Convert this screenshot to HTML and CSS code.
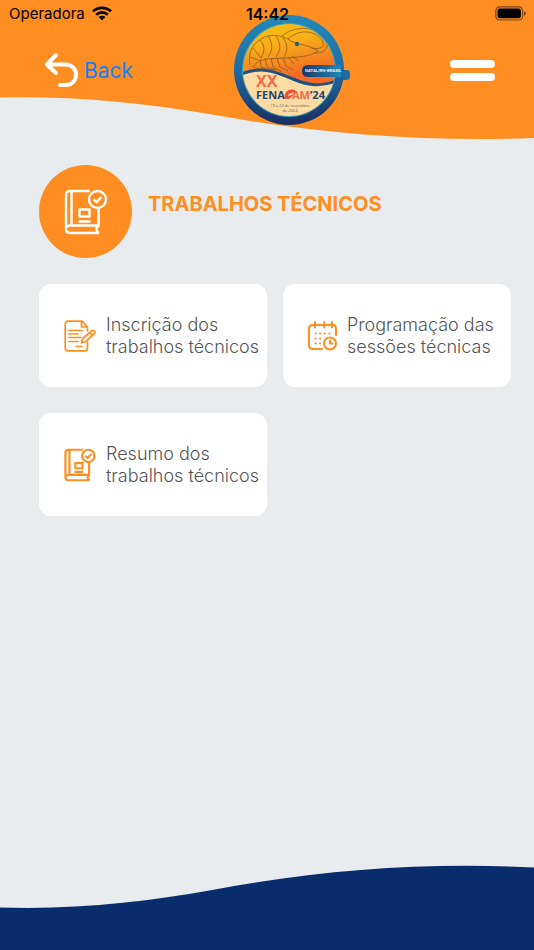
FILE: index.html
```html
<!DOCTYPE html>
<html lang="pt-BR">
<head>
  <meta charset="UTF-8">
  <meta name="viewport" content="width=device-width, initial-scale=1.0">
  <title>Trabalhos Técnicos</title>
  <link rel="stylesheet" href="styles.css">
</head>
<body>
<header class="header">
  <svg class="header-wave" viewBox="0 0 534 140" preserveAspectRatio="none" aria-hidden="true">
    <path d="M0 0H534V138C430 142 325 135 215 115C135 101 65 96 0 97.500Z" fill="#fe8e22"/>
  </svg>

  <div class="status-bar">
    <div class="carrier">
      <span>Operadora</span>
      <svg width="20" height="15" viewBox="0 0 20 15" aria-hidden="true">
        <g fill="none" stroke="#000" stroke-width="2.700">
          <path d="M1 5.300C6 .6 14 .6 19 5.300"/>
          <path d="M4.200 8.700C7.500 5.700 12.500 5.700 15.800 8.700"/>
        </g>
        <path d="M6.600 11.100C8.600 9.400 11.400 9.400 13.400 11.100L10 14.500Z"/>
      </svg>
    </div>
    <span class="clock">14:42</span>
    <svg class="battery" width="31" height="15" viewBox="0 0 31 15" aria-hidden="true">
      <rect x=".8" y=".8" width="26.800" height="13.200" rx="4" fill="none" stroke="#000" stroke-opacity=".5" stroke-width="1.200"/>
      <rect x="2.500" y="2.500" width="23.400" height="9.800" rx="2.300"/>
      <path d="M29 5.200Q31 6 31 7.500Q31 9 29 9.800Z" fill-opacity=".55"/>
    </svg>
  </div>

  <nav class="nav">
    <a class="back" href="#">
      <svg width="35" height="36" viewBox="0 0 35 36" aria-hidden="true">
        <path d="M12 3L3 12.500L12 21M3 12.500H21C28 12.500 32 17 32 22.500C32 28.500 28 33 21 33H16" fill="none" stroke="#fff" stroke-width="4" stroke-linecap="round" stroke-linejoin="round"/>
      </svg>
      <span>Back</span>
    </a>

    <svg class="logo" width="116" height="112" viewBox="0 0 116 112" role="img" aria-label="XX Fenacam 24">
      <defs>
        <linearGradient id="ring" x1="0" y1="0" x2="0" y2="1">
          <stop offset="0" stop-color="#2389b8"/>
          <stop offset=".5" stop-color="#1f6ca4"/>
          <stop offset="1" stop-color="#192d60"/>
        </linearGradient>
        <linearGradient id="sky" x1="0" y1="0" x2=".2" y2="1">
          <stop offset="0" stop-color="#f8c50c"/>
          <stop offset=".3" stop-color="#f9ad18"/>
          <stop offset=".65" stop-color="#f36a24"/>
        </linearGradient>
        <linearGradient id="banner">
          <stop offset="0" stop-color="#19356b"/>
          <stop offset="1" stop-color="#2289b7"/>
        </linearGradient>
        <clipPath id="disc"><circle cx="55" cy="56" r="46"/></clipPath>
      </defs>
      <path d="M102 56H113Q116 56 116 60V63Q116 66 112 66H102Z" fill="#1d6da2"/>
      <circle cx="55" cy="56" r="55" fill="url(#ring)"/>
      <circle cx="55" cy="56" r="47" fill="#32a4c4"/>
      <g clip-path="url(#disc)">
        <rect x="7" y="7" width="97" height="97" fill="url(#sky)"/>
        <path d="M5 61C28 51 42 58 59 65C75 72 88 73 105 66V112H5Z" fill="#ffdca3"/>
        <path d="M5 61C28 51 42 58 59 65C75 72 88 73 105 66" fill="none" stroke="#1f5184" stroke-width="3"/>
        <g fill="none" stroke="#805621" stroke-width=".7">
          <path d="M16 51C14 41 17 31 27 25C36 19 48 21 57 27C65 31 76 31 84 37C76 43 63 43 52 44C39 45 25 43 20 52"/>
          <path d="M48 22C61 11 82 12 91 24C97 33 91 40 80 39M54 25C66 14 82 17 88 26C92 33 86 36 77 34"/>
          <path d="M26 26C31 31 31 38 27 44M34 22C39 29 39 37 34 43M42 22C47 29 47 37 42 43M49 24C54 30 54 37 50 43M19 34L27 44M16 43L24 46"/>
          <path d="M54 43L60 50M49 44L52 52L59 56M43 44L46 53L54 57M37 44L39 53L48 58M31 44L33 53L42 56M26 45L27 53L36 56M58 42L65 47M18 52C26 57 35 54 42 56"/>
        </g>
        <circle cx="63" cy="30" r="2.200" fill="#245d7b"/>
      </g>
      <path d="M74 51H107V63H74Q68 63 68 57Q68 51 74 51Z" fill="url(#banner)"/>
      <text x="71" y="58" class="logo-city">NATAL/RN-BRASIL</text>
      <text x="22" y="73" class="logo-xx">XX</text>
      <text x="22" y="85" class="logo-name">FENA</text>
      <path d="M61 76Q54 74 51 80Q49 85 53 85Q57 85 60 80Q55 83 54 81Q56 78 61 79Z" fill="#f14e37"/>
      <text x="58" y="85" class="logo-name"><tspan class="logo-am">AM</tspan>’24</text>
      <text x="56" y="93" class="logo-date">19 a 22 de novembro</text>
      <text x="56" y="98" class="logo-date">de 2024</text>
    </svg>

    <button class="menu" type="button" aria-label="Menu">
      <span class="menu-line"></span>
      <span class="menu-line"></span>
    </button>
  </nav>
</header>

<!-- book icon, used in the title and in the last card -->
<svg class="sprite" aria-hidden="true">
  <symbol id="book" viewBox="0 0 44 46">
    <g fill="none" stroke="currentColor" stroke-linejoin="round">
      <path d="M26 2H6Q2 2 2 6V40Q2 44 6 44H35M2 40Q2 36.500 6 36.500H34.500V19M7.500 2V36M35 36.500Q30 40 35 44"/>
      <circle cx="33.500" cy="10.500" r="8.500"/>
      <path d="M29.500 10.500L32.500 13.200L37.500 8"/>
      <path d="M15.500 20.500H25.500V27.500H15.500ZM14.500 32.500H26.500"/>
    </g>
  </symbol>
</svg>

<main class="content">
  <div class="page-title">
    <span class="title-icon"><svg class="book" width="44" height="46"><use href="#book"/></svg></span>
    <h1>TRABALHOS TÉCNICOS</h1>
  </div>

  <div class="cards">
    <a class="card" href="#">
      <svg width="32" height="32" viewBox="0 0 32 32" aria-hidden="true">
        <g fill="none" stroke="currentColor" stroke-width="1.700" stroke-linecap="round" stroke-linejoin="round">
          <path d="M23.500 11V7L18 1.200H4Q1.200 1.200 1.200 4V28Q1.200 30.800 4 30.800H20.500Q23.500 30.800 23.500 28V22M17.500 1.500V7H23"/>
          <path d="M5 10.500H18M5 14H14M5 17.500H17M5 21.500H14M12 26.500H18"/>
          <path d="M17.500 22.800L18.800 18.500L27.500 10.800Q29 9.800 30.500 11.200Q31.500 12.800 30 14.200L21.800 21.500ZM25.800 12.500L28.500 15.500"/>
        </g>
      </svg>
      <span>Inscrição dos<br>trabalhos técnicos</span>
    </a>

    <a class="card" href="#">
      <svg width="29" height="30" viewBox="0 0 29 30" aria-hidden="true">
        <g fill="none" stroke="currentColor" stroke-width="2" stroke-linecap="round">
          <path d="M25 4Q28 4 28 8V14M4.500 4Q1 4 1 7.500V24Q1 28 5 28H14"/>
          <path d="M7 1V6.500M16.200 1V6.500M24 1V6.500M4.500 4H25"/>
          <circle cx="22" cy="22.500" r="6"/>
          <path d="M22 19.500V22.500H24.500"/>
          <path d="M7.500 12.500H7.600M12 12.500H12.100M16.700 12.500H16.800M21.500 12.500H21.600M7.500 17.500H7.600M12 17.500H12.100M7.500 22.500H7.600M12 22.500H12.100" stroke-width="2.200"/>
        </g>
      </svg>
      <span>Programação das<br>sessões técnicas</span>
    </a>

    <a class="card" href="#">
      <svg class="book book-small" width="32" height="34"><use href="#book"/></svg>
      <span>Resumo dos<br>trabalhos técnicos</span>
    </a>
  </div>
</main>

<footer class="footer">
  <svg class="footer-wave" viewBox="0 0 534 85" preserveAspectRatio="none" aria-hidden="true">
    <path d="M0 42.500C75 45 145 37 215 24.500C325 4 430 -3 534 2.500V85H0Z" fill="#082c6c"/>
  </svg>
</footer>
</body>
</html>
```

FILE: styles.css
```css
* {
    box-sizing: border-box;
}
body {
    display: flex;
    flex-direction: column;
    min-height: 100vh;
    margin: 0;
    background-color: #e8ecef;
    font-family: Inter, "Liberation Sans", sans-serif;
}
a {
    text-decoration: none;
}
svg {
    flex-shrink: 0;
}
.sprite {
    position: absolute;
    width: 0;
    height: 0;
}

/* header */
.header {
    position: relative;
    height: 140px;
}
.header-wave {
    position: absolute;
    top: 0;
    left: 0;
    width: 100%;
    height: 100%;
}
.status-bar {
    position: relative;
    z-index: 2;
    display: grid;
    grid-template-columns: 1fr auto 1fr;
    align-items: center;
    height: 27px;
    padding: 0 8px 0 9px;
}
.carrier {
    display: flex;
    align-items: center;
    gap: 7px;
    font-size: 15px;
}
.clock {
    font-size: 16px;
    font-weight: 600;
}
.battery {
    justify-self: end;
}
.nav {
    position: relative;
    display: flex;
    align-items: center;
    justify-content: space-between;
    height: 112px;
    margin-top: -13px;
    padding: 0 39px 0 44px;
}
.back {
    display: flex;
    align-items: center;
    gap: 5px;
    color: #147efb;
    font-size: 21px;
}
.menu {
    display: flex;
    flex-direction: column;
    gap: 5px;
    width: 45px;
    padding: 0;
    border: none;
    background: none;
    cursor: pointer;
}
.menu-line {
    width: 100%;
    height: 8px;
    border-radius: 4px;
    background-color: white;
}

/* logo lettering */
.logo-xx {
    fill: #f0694a;
    font-family: "Open Sans", sans-serif;
    font-size: 16px;
    font-weight: 700;
}
.logo-name {
    fill: #24466f;
    font-family: "Open Sans", sans-serif;
    font-size: 11px;
    font-weight: 700;
}
.logo-am {
    fill: #f0694a;
}
.logo-city {
    fill: white;
    font-size: 4px;
    font-weight: 600;
}
.logo-date {
    fill: #5d5b59;
    font-family: "Open Sans", sans-serif;
    font-size: 4px;
    text-anchor: middle;
}

/* content */
.content {
    padding: 25px 23px 26px 39px;
}
.page-title {
    display: flex;
    align-items: center;
    gap: 16px;
    margin-bottom: 26px;
}
.title-icon {
    display: flex;
    align-items: center;
    justify-content: center;
    width: 93px;
    height: 93px;
    border-radius: 50%;
    background-color: #fe8e22;
    color: white;
}
.book {
    stroke-width: 2.4px;
}
.book-small {
    stroke-width: 3px;
}
.page-title h1 {
    margin: 0;
    padding-bottom: 16px;
    color: #fe8e22;
    font-size: 20px;
    font-weight: 700;
}
.cards {
    display: grid;
    grid-template-columns: 1fr 1fr;
    gap: 26px 16px;
}
.card {
    display: flex;
    align-items: center;
    gap: 10px;
    min-height: 103px;
    padding-left: 25px;
    border-radius: 12px;
    background-color: white;
    color: #fe8e22;
    white-space: nowrap;
}
.card span {
    color: #555;
    font-size: 18px;
    font-weight: 300;
    line-height: 22px;
}

/* footer */
.footer {
    margin-top: auto;
}
.footer-wave {
    display: block;
    width: 100%;
    height: 85px;
}
```
